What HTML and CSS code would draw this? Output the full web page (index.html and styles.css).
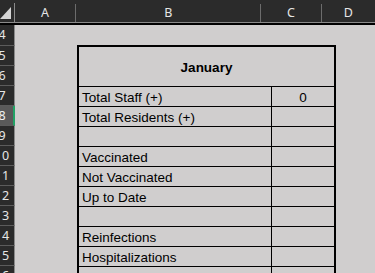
FILE: index.html
```html
<!DOCTYPE html>
<html lang="en">
<head>
  <meta charset="UTF-8">
  <meta name="viewport" content="width=device-width, initial-scale=1.0">
  <title>Monthly Report</title>
  <link rel="stylesheet" href="styles.css">
</head>
<body>
  <div class="sheet">
    <!-- column letters -->
    <div class="col-heads">
      <div class="corner">
        <svg width="14" height="18" viewBox="0 0 14 18">
          <polygon points="11,4 11,16 0,16" fill="#d4d4d4" />
        </svg>
      </div>
      <div class="col-head col-a">A</div>
      <div class="col-head col-b">B</div>
      <div class="col-head col-c">C</div>
      <div class="col-head col-d">D</div>
    </div>

    <div class="grid-body">
      <!-- row numbers -->
      <div class="row-heads">
        <div class="row-head"><span>4</span></div>
        <div class="row-head"><span>5</span></div>
        <div class="row-head"><span>6</span></div>
        <div class="row-head"><span>7</span></div>
        <div class="row-head selected"><span>8</span></div>
        <div class="row-head"><span>9</span></div>
        <div class="row-head"><span>10</span></div>
        <div class="row-head"><span>11</span></div>
        <div class="row-head"><span>12</span></div>
        <div class="row-head"><span>13</span></div>
        <div class="row-head"><span>14</span></div>
        <div class="row-head"><span>15</span></div>
        <div class="row-head"><span>16</span></div>
      </div>

      <div class="cells">
        <div class="report">
          <div class="report-title">January</div>
          <div class="report-row"><div class="label">Total Staff (+)</div><div class="value">0</div></div>
          <div class="report-row"><div class="label">Total Residents (+)</div><div class="value"></div></div>
          <div class="report-row"><div class="label"></div><div class="value"></div></div>
          <div class="report-row"><div class="label">Vaccinated</div><div class="value"></div></div>
          <div class="report-row"><div class="label">Not Vaccinated</div><div class="value"></div></div>
          <div class="report-row"><div class="label">Up to Date</div><div class="value"></div></div>
          <div class="report-row"><div class="label"></div><div class="value"></div></div>
          <div class="report-row"><div class="label">Reinfections</div><div class="value"></div></div>
          <div class="report-row"><div class="label">Hospitalizations</div><div class="value"></div></div>
          <div class="report-row"><div class="label">Deaths</div><div class="value"></div></div>
        </div>
      </div>
    </div>
  </div>
</body>
</html>
```

FILE: styles.css
```css
body {
  margin: 0;
  padding: 0;
  background-color: #d0cece;
  font-family: "Liberation Sans", Arial, sans-serif;
  overflow: hidden;
}
.sheet {
  display: flex;
  flex-direction: column;
  height: 100vh;
}

/* column header bar */
.col-heads {
  display: flex;
  align-items: flex-end;
  height: 22px;
  background-color: #2b2b2b;
  border-bottom: 1px solid #8a8a8a;
}
.corner {
  width: 15px;
  height: 19px;
  box-sizing: border-box;
  border-right: 1px solid #8a8a8a;
}
.corner svg {
  display: block;
}
.col-head {
  height: 18px;
  line-height: 18px;
  box-sizing: border-box;
  border-right: 1px solid #6c6c6c;
  color: #e6e6e6;
  font-family: "Noto Sans", sans-serif;
  font-size: 12.5px;
  text-align: center;
}
.col-a { width: 64px; }
.col-b { width: 194px; }
.col-c { width: 63px; }
.col-d { width: 56px; border-right: none; }

/* rows */
.grid-body {
  flex: 1;
  display: flex;
  border-top: 2px solid #000;
  overflow: hidden;
}
.row-heads {
  width: 15px;
  background-color: #2b2b2b;
}
.row-head {
  height: 20px;
  box-sizing: border-box;
  border-bottom: 1px solid #5c5c5c;
  border-right: 1px solid #8a8a8a;
  overflow: hidden;
}
.row-head:first-child {
  height: 21px;
}
.row-head span {
  display: block;
  width: 24px;
  margin-left: -10px;
  line-height: 19px;
  text-align: center;
  color: #e6e6e6;
  font-family: "Noto Sans", sans-serif;
  font-size: 12.5px;
}
.row-head.selected {
  background-color: #5a5a5a;
  border-right: 2px solid #21a366;
}
.row-head.selected span {
  color: #f2f2f2;
}

.cells {
  flex: 1;
  padding: 20px 0 0 62px;
}
.report {
  width: 259px;
  box-sizing: border-box;
  border: 2px solid #000;
  border-bottom: none;
  color: #000;
  font-size: 13.5px;
}
.report-title {
  height: 40px;
  box-sizing: border-box;
  border-bottom: 1px solid #000;
  display: flex;
  align-items: center;
  justify-content: center;
  font-weight: bold;
  padding-top: 1px;
}
.report-row {
  display: flex;
  height: 20px;
  box-sizing: border-box;
  border-bottom: 1px solid #000;
}
.label {
  width: 193px;
  box-sizing: border-box;
  border-right: 1px solid #000;
  padding: 2px 0 0 3px;
  line-height: 17px;
  white-space: nowrap;
}
.value {
  flex: 1;
  padding-top: 2px;
  line-height: 17px;
  text-align: center;
}
```
